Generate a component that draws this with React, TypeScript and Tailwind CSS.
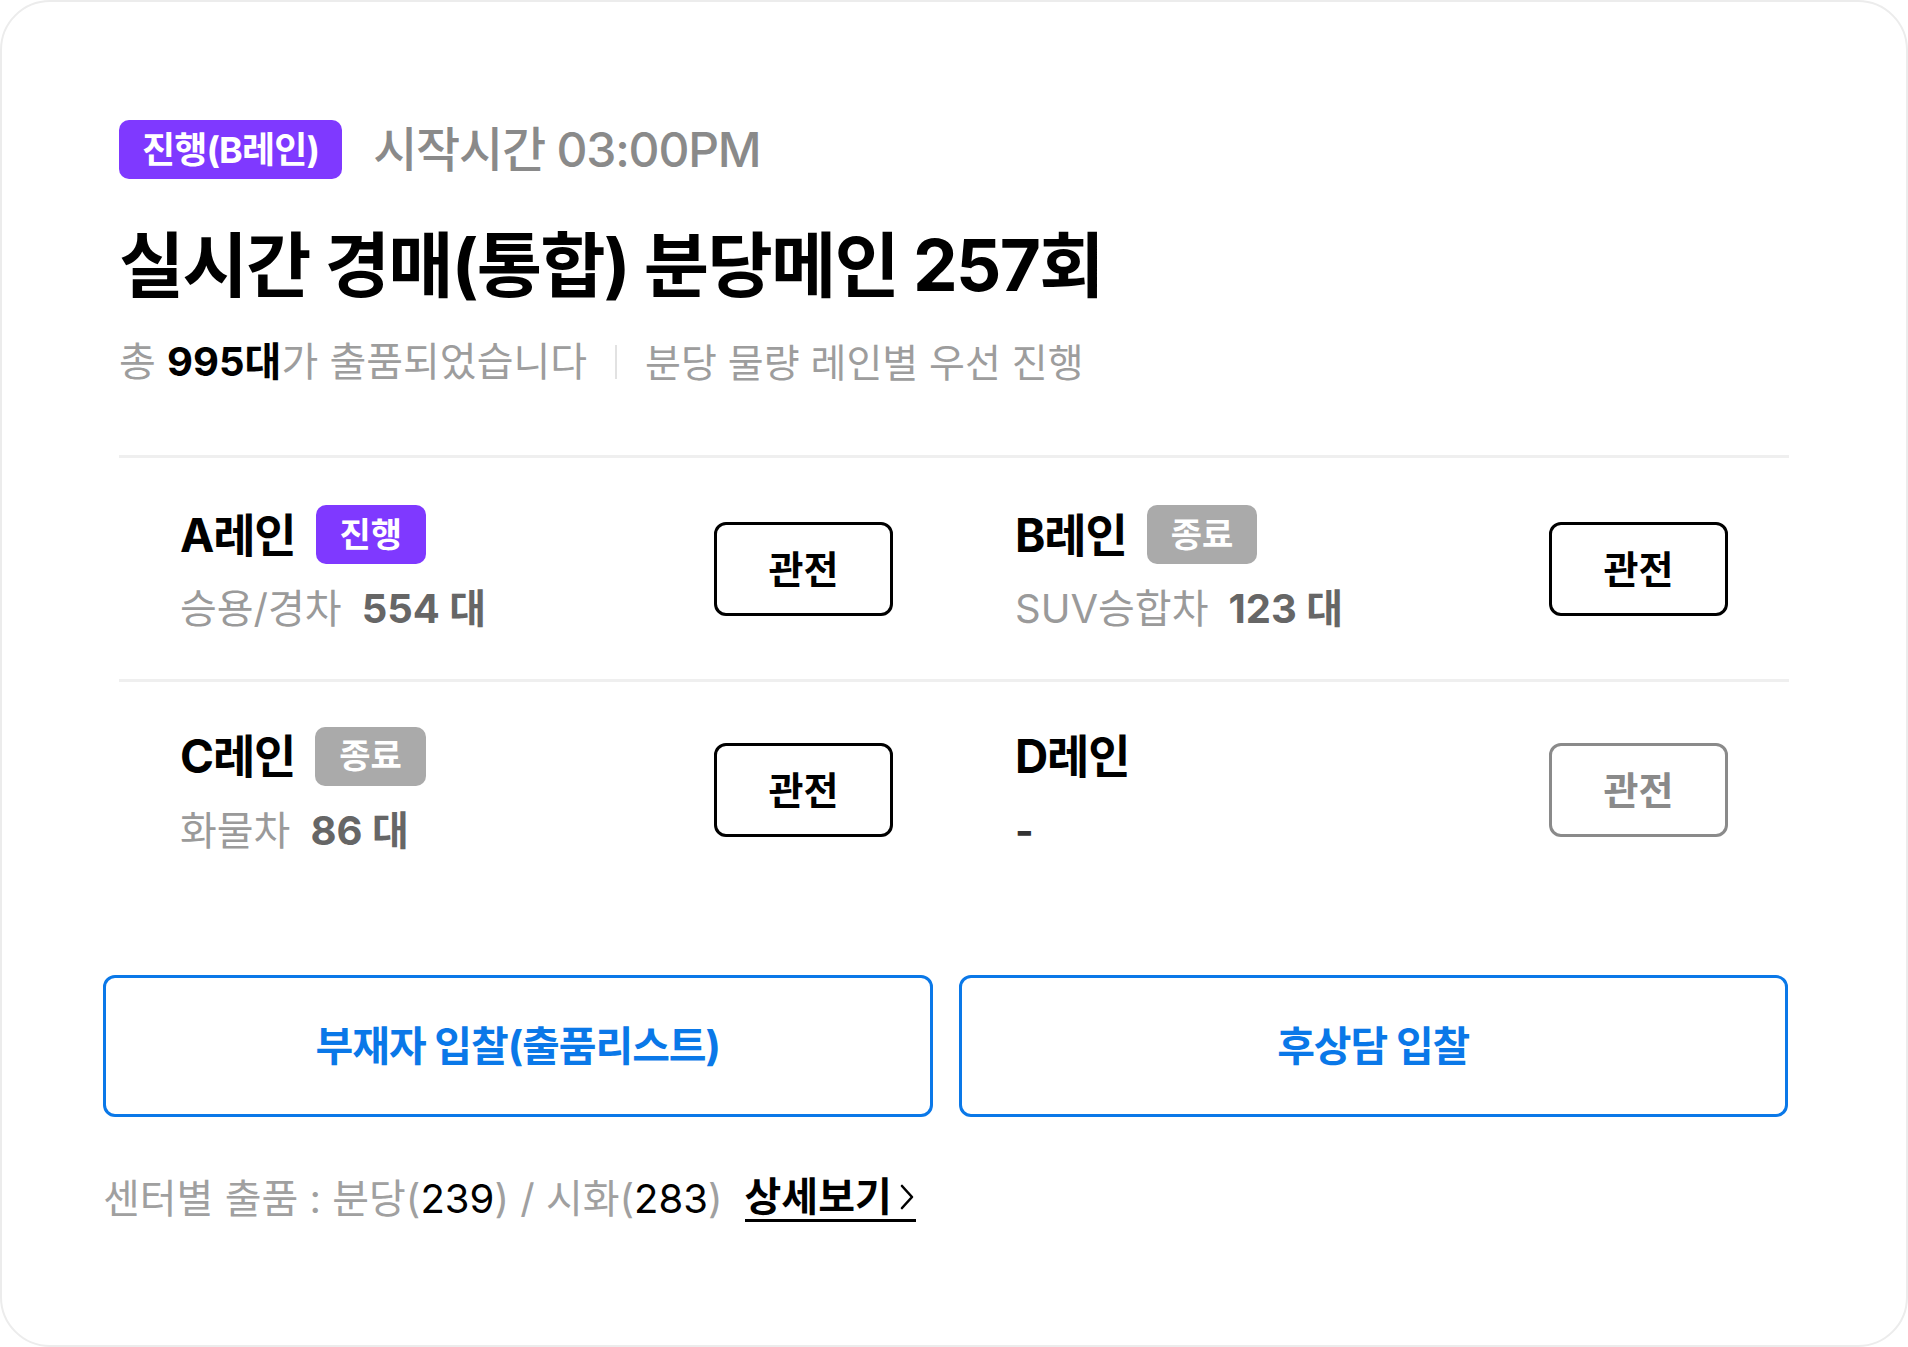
import { ReactNode } from 'react';

const font = { fontFamily: 'Inter, "Noto Sans CJK KR", "Noto Sans", sans-serif' };

type Lane = {
  name: string;
  status?: 'live' | 'done';
  kind?: string;
  count?: string;
  disabled?: boolean;
};

const lanes: Lane[] = [
  { name: 'A레인', status: 'live', kind: '승용/경차', count: '554 대' },
  { name: 'B레인', status: 'done', kind: 'SUV승합차', count: '123 대' },
  { name: 'C레인', status: 'done', kind: '화물차', count: '86 대' },
  { name: 'D레인', disabled: true },
];

function StatusBadge({ status }: { status: 'live' | 'done' }) {
  return (
    <span
      className={`inline-flex h-[59px] items-center rounded-[10px] px-[24px] text-[34px] font-bold leading-none text-white ${
        status === 'live' ? 'bg-[#7f39ff]' : 'bg-[#aaaaaa]'
      }`}
    >
      {status === 'live' ? '진행' : '종료'}
    </span>
  );
}

function LaneCell({ lane, bordered }: { lane: Lane; bordered: boolean }) {
  return (
    <div className={`flex items-center justify-between px-[61px] ${bordered ? 'h-[224px] border-b-[3px] border-[#efefef]' : 'h-[216px]'}`}>
      <div className="flex flex-col gap-[22px]">
        <div className="flex h-[59px] items-center gap-[20px]">
          <span className="text-[46px] font-bold leading-none tracking-tight text-black">{lane.name}</span>
          {lane.status && <StatusBadge status={lane.status} />}
        </div>
        <div className="flex h-[46px] items-center text-[40px] leading-none">
          {lane.kind ? (
            <>
              <span className="text-[#9a9a9a]">{lane.kind}</span>
              <span className="ml-[20px] font-bold text-[#666666]">{lane.count}</span>
            </>
          ) : (
            <span className="font-bold text-[#333]">-</span>
          )}
        </div>
      </div>
      <button
        className={`flex h-[94px] w-[179px] items-center justify-center rounded-[12px] border-[3px] bg-white text-[38px] font-bold leading-none ${
          lane.disabled ? 'border-[#8a8a8a] text-[#8a8a8a]' : 'border-black text-black'
        }`}
      >
        관전
      </button>
    </div>
  );
}

function BlueButton({ children }: { children: ReactNode }) {
  return (
    <button className="flex h-[142px] items-center justify-center rounded-[12px] border-[3px] border-[#0a78e8] bg-white text-[41px] font-bold leading-none tracking-tight text-[#0a78e8]">
      {children}
    </button>
  );
}

export default function App() {
  return (
    <div className="min-h-screen bg-white" style={font}>
      <div className="h-[1347px] w-[1908px] rounded-[50px] border-2 border-[#ececec] bg-white pt-[118px]">
        {/* header */}
        <div className="px-[117px]">
          <div className="flex items-center gap-[31px]">
            <span className="inline-flex h-[59px] items-center rounded-[10px] bg-[#7f39ff] px-[23px] text-[36px] font-bold leading-none tracking-tight text-white">
              진행(B레인)
            </span>
            <span className="text-[48px] font-medium leading-none tracking-tight text-[#8a8a8a]">시작시간 03:00PM</span>
          </div>
          <h1 className="mt-[46px] h-[80px] text-[71px] font-bold leading-[80px] tracking-tight text-black">
            실시간 경매(통합) 분당메인 257회
          </h1>
          <div className="mt-[32px] flex h-[50px] items-center text-[40px] leading-none text-[#9d9d9d]">
            <span>
              총 <b className="font-bold text-black">995대</b>가 출품되었습니다
            </span>
            <span className="mx-[28px] h-[34px] w-[2px] bg-[#e2e2e2]" />
            <span className="text-[39px]">분당 물량 레인별 우선 진행</span>
          </div>

          {/* lanes */}
          <div className="mt-[68px] grid grid-cols-2 border-t-[3px] border-[#efefef]">
            {lanes.map((lane, i) => (
              <LaneCell key={lane.name} lane={lane} bordered={i < 2} />
            ))}
          </div>
        </div>

        {/* actions */}
        <div className="mt-[77px] pl-[101px] pr-[118px]">
          <div className="grid grid-cols-2 gap-[26px]">
            <BlueButton>부재자 입찰(출품리스트)</BlueButton>
            <BlueButton>후상담 입찰</BlueButton>
          </div>
          <div className="mt-[57px] flex h-[50px] items-center text-[40px] leading-none text-[#a0a0a0]">
            <span>
              센터별 출품 : 분당(<span className="text-black">239</span>) / 시화(<span className="text-black">283</span>)
            </span>
            <a className="ml-[22px] flex items-center gap-[6px] border-b-[3px] border-black pb-[2px] font-bold text-black">
              상세보기
              <svg width="18" height="30" viewBox="0 0 18 30" fill="none">
                <path d="M4 4l10 11L4 26" stroke="black" strokeWidth="2.6" strokeLinecap="round" strokeLinejoin="round" />
              </svg>
            </a>
          </div>
        </div>
      </div>
    </div>
  );
}
